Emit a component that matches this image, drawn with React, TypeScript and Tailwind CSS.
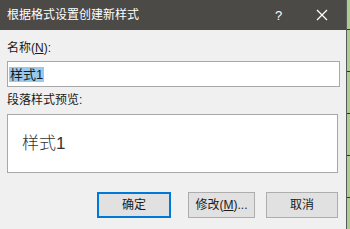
import React from "react";

const font = { fontFamily: '"Liberation Sans","Noto Sans CJK SC",sans-serif' };

export default function App() {
  return (
    <div className="flex h-[229px] w-[350px] overflow-hidden bg-[#f0f0f0]" style={font}>
      <div className="flex w-[346px] flex-col">
        <div className="flex h-[30px] items-center bg-[#4b4a47] pl-[7px] text-[12px] text-white">
          <span className="flex-1">根据格式设置创建新样式</span>
          <span className="w-[14px] text-[13px] leading-none">?</span>
          <span className="ml-[26px] mr-[17px] flex h-[14px] w-[14px] items-center justify-center">
            <svg width="12" height="12" viewBox="0 0 12 12">
              <path d="M1 1L11 11M11 1L1 11" stroke="white" strokeWidth="1.3" />
            </svg>
          </span>
        </div>
        <div className="flex flex-1 flex-col bg-[#f0f0f0] pl-[7px] pt-[10px] text-[12px] text-[#1a1a1a]">
          <div className="h-[16px] leading-[16px]">
            名称(<span className="underline">N</span>):
          </div>
          <div className="mt-[5px] flex h-[26px] w-[333px] items-center border border-[#a8a8a8] bg-white pl-[1px]">
            <span className="bg-[#99c9ef] px-[1px] text-[13px] leading-[15px] text-[#1a1a1a]">样式1</span>
          </div>
          <div className="mt-[5px] h-[16px] leading-[16px]">段落样式预览:</div>
          <div className="mt-[6px] flex h-[59px] w-[331px] items-center border border-[#a8a8a8] bg-white pl-[14px]">
            <span className="text-[17px] font-light text-[#333]">样式1</span>
          </div>
          <div className="mt-[19px] flex h-[26px]">
            <div className="ml-[90px] flex w-[74px] items-center justify-center border-2 border-[#0078d7] bg-[#e1e1e1]">
              确定
            </div>
            <div className="ml-[17px] flex w-[67px] items-center justify-center border border-[#adadad] bg-[#e1e1e1]">
              修改(<span className="underline">M</span>)...
            </div>
            <div className="ml-[11px] flex w-[72px] items-center justify-center border border-[#adadad] bg-[#e1e1e1]">
              取消
            </div>
          </div>
        </div>
      </div>
      <div className="w-[1px] bg-[#5a5a5a]" />
      <div className="flex flex-1 flex-col bg-[#a9d08e]">
        <div className="h-[29px]" />
        <div className="h-[1px] bg-[#333]" />
        <div className="h-[41px]" />
        <div className="h-[1px] bg-[#333]" />
        <div className="h-[41px]" />
        <div className="h-[1px] bg-[#333]" />
        <div className="h-[41px]" />
        <div className="h-[1px] bg-[#333]" />
        <div className="h-[41px]" />
        <div className="h-[1px] bg-[#333]" />
      </div>
    </div>
  );
}
